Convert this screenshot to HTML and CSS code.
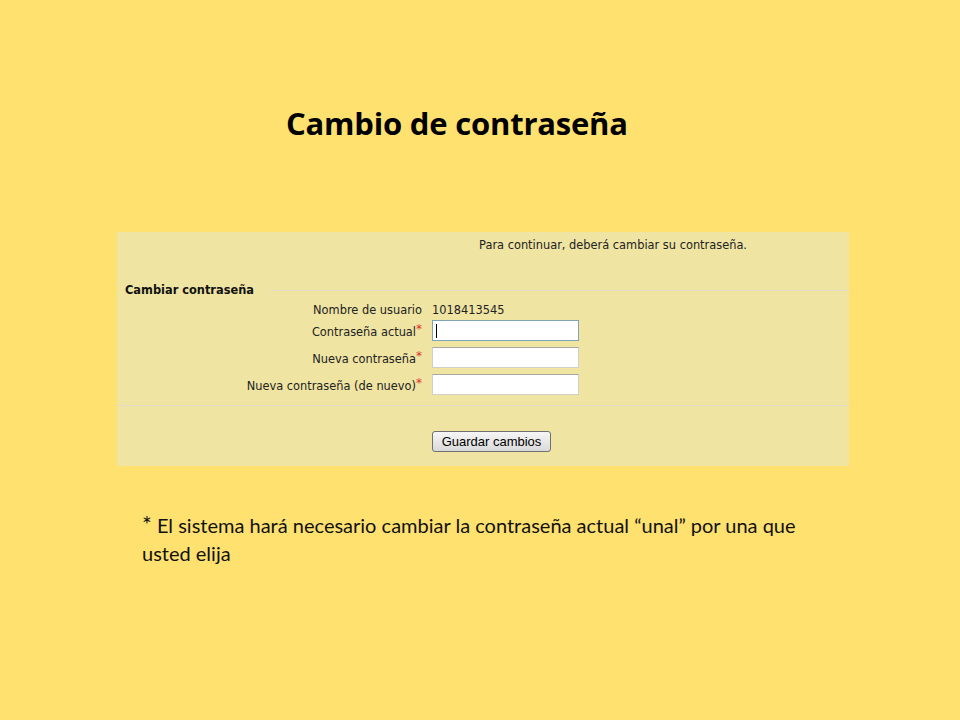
FILE: index.html
```html
<!DOCTYPE html>
<html lang="es">
<head>
<meta charset="utf-8">
<title>Cambio de contraseña</title>
<link rel="stylesheet" href="styles.css">
</head>
<body>
<div class="slide">
  <h1 class="title">Cambio de contraseña</h1>
  <div class="panel">
    <div class="notice">Para continuar, deberá cambiar su contraseña.</div>
    <fieldset class="group">
      <legend class="legend">Cambiar contraseña</legend>
      <div class="row row-user">
        <div class="label">Nombre de usuario</div>
        <div class="value">1018413545</div>
      </div>
      <div class="row">
        <div class="label">Contraseña actual<span class="req">*</span></div>
        <div class="value"><span class="input focus"><span class="caret"></span></span></div>
      </div>
      <div class="row">
        <div class="label">Nueva contraseña<span class="req">*</span></div>
        <div class="value"><span class="input"></span></div>
      </div>
      <div class="row row-last">
        <div class="label">Nueva contraseña (de nuevo)<span class="req">*</span></div>
        <div class="value"><span class="input"></span></div>
      </div>
    </fieldset>
    <div class="actions">
      <span class="button">Guardar cambios</span>
    </div>
  </div>
  <p class="note"><span class="star">*</span> El sistema hará necesario cambiar la contraseña actual “unal” por una que usted elija</p>
</div>
</body>
</html>
```
FILE: styles.css
```css
html, body {
  margin: 0;
  padding: 0;
}
body {
  background: #ffe170;
  width: 960px;
  height: 720px;
  overflow: hidden;
}
.slide {
  padding-top: 103px;
}
.title {
  margin: 0 0 0 286px;
  font-family: "Open Sans", "DejaVu Sans", sans-serif;
  font-weight: 700;
  font-size: 31px;
  line-height: 40px;
  color: #000;
  letter-spacing: -0.2px;
}
.panel {
  margin: 89px 0 0 117px;
  width: 732px;
  background: #efe4a2;
  font-family: "DejaVu Sans", Verdana, sans-serif;
  font-size: 11.4px;
  line-height: 14px;
  color: #222;
}
.notice {
  padding-top: 6px;
  height: 50px;
  box-sizing: border-box;
  text-align: right;
  padding-right: 102px;
}
.group {
  margin: 0;
  padding: 5px 0 10px 0;
  border: 0;
  border-top: 1px solid #e2dcc2;
  border-bottom: 1px solid #e2dcc2;
}
.legend {
  font-weight: 700;
  padding: 0 16px 0 8px;
  color: #111;
  line-height: 16px;
}
.row {
  display: flex;
  align-items: center;
  margin-bottom: 6px;
}
.row-user {
  margin-bottom: 3px;
}
.row-last {
  margin-bottom: 0;
}
.label {
  width: 306px;
  text-align: right;
  white-space: nowrap;
  padding-right: 1px;
  box-sizing: border-box;
}
.req {
  color: #e03030;
  font-size: 12px;
  vertical-align: 3px;
  margin-left: 0;
}
.value {
  padding-left: 9px;
}
.input {
  display: block;
  width: 147px;
  height: 21px;
  box-sizing: border-box;
  background: #fff;
  border: 1px solid #d0d0c8;
  border-top-color: #a8a8a0;
  position: relative;
}
.input.focus {
  border-color: #7fa3b8;
}
.caret {
  position: absolute;
  left: 3px;
  top: 3px;
  width: 1px;
  height: 14px;
  background: #000;
}
.actions {
  height: 60px;
  padding-top: 25px;
  box-sizing: border-box;
  padding-left: 315px;
}
.button {
  display: inline-block;
  width: 119px;
  height: 21px;
  box-sizing: border-box;
  border: 1px solid #707070;
  border-radius: 3px;
  background: linear-gradient(#f6f6f6, #dadada);
  font-family: "Liberation Sans", Arial, sans-serif;
  font-size: 13px;
  line-height: 19px;
  text-align: center;
  color: #000;
}
.note {
  margin: 45px 0 0 142px;
  width: 680px;
  font-family: "Lato", "Open Sans", sans-serif;
  font-size: 20px;
  line-height: 28px;
  color: #111;
}
.star {
  font-size: 23px;
  line-height: 20px;
}
```
